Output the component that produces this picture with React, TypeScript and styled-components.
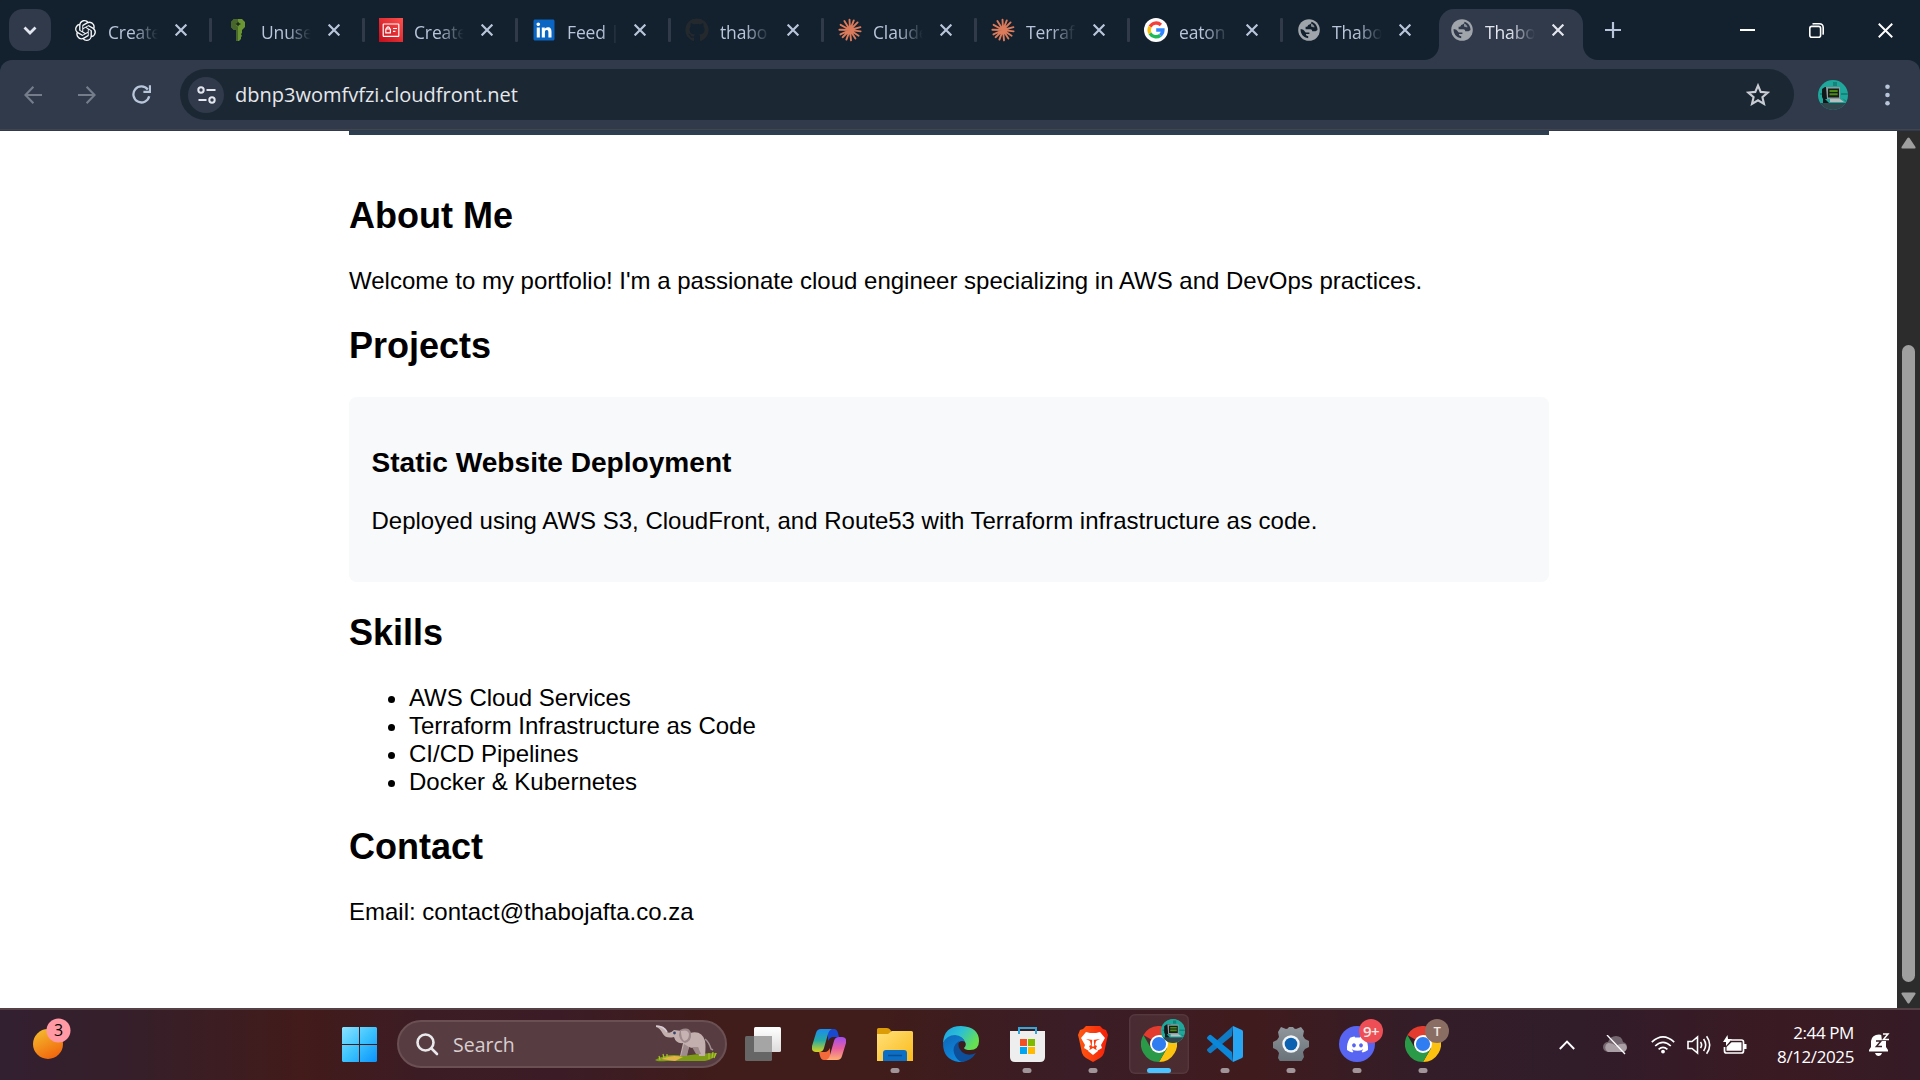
import React from "react";
import styled, { createGlobalStyle, css } from "styled-components";
import { SiOpenai, SiBrave } from "react-icons/si";
import { FaLinkedin, FaDiscord, FaGithub } from "react-icons/fa";

const GlobalStyle = createGlobalStyle`
  *, *::before, *::after { box-sizing: border-box; }
  html, body { margin: 0; padding: 0; overflow: hidden; background: #fff; }
`;

const uiFont = `"Open Sans", "Noto Sans", sans-serif`;
const frame = "#303a4b";
const strip = "#13202d";

const Screen = styled.div`
  width: 1920px;
  height: 1080px;
  display: flex;
  flex-direction: column;
  overflow: hidden;
  font-family: ${uiFont};
  svg { display: block; flex: none; }
`;

/* ---------- tab strip ---------- */

const TabStrip = styled.div`
  height: 60px;
  flex: none;
  display: flex;
  background: ${strip};
  padding-left: 9px;
`;

const TabSearch = styled.button`
  width: 42px;
  height: 42px;
  margin: 9px 8px 0 0;
  padding: 0;
  border: 0;
  border-radius: 14px;
  background: ${frame};
  display: grid;
  place-items: center;
`;

const Tab = styled.div<{ $active?: boolean }>`
  position: relative;
  width: 153px;
  height: 60px;
  padding-left: 14px;
  display: flex;
  align-items: center;
  color: ${(p) => (p.$active ? "#e3e6ee" : "#b9c5da")};
  ${(p) =>
    p.$active &&
    css`
      &::before {
        content: "";
        position: absolute;
        left: 3px;
        top: 9px;
        width: 144px;
        height: 51px;
        border-radius: 15px 15px 0 0;
        background: ${frame};
      }
      &::after {
        content: "";
        position: absolute;
        left: -12px;
        bottom: 0;
        width: 174px;
        height: 15px;
        background:
          radial-gradient(circle at 0 0, transparent 14.5px, ${frame} 15.5px) left / 15px 15px no-repeat,
          radial-gradient(circle at 100% 0, transparent 14.5px, ${frame} 15.5px) right / 15px 15px no-repeat;
      }
    `}
  > * { position: relative; z-index: 1; }
`;

const Favicon = styled.span`
  width: 24px;
  height: 24px;
  display: grid;
  place-items: center;
`;

const TabTitle = styled.span<{ $fade: boolean }>`
  width: 50px;
  margin: 3px 0 0 11px;
  overflow: hidden;
  white-space: nowrap;
  font-size: 17.5px;
  line-height: 26px;
  letter-spacing: -0.15px;
  mask-image: linear-gradient(90deg, #000 ${(p) => (p.$fade ? "50%" : "70%")}, transparent 100%);
`;

const TabClose = styled.span`
  margin-left: 17px;
  display: flex;
`;

const TabDivider = styled.span`
  width: 3px;
  height: 24px;
  margin-left: auto;
  border-radius: 1px;
  background: #303a49;
`;

const NewTab = styled.div`
  width: 54px;
  height: 60px;
  margin-left: -3px;
  display: grid;
  place-items: center;
`;

const WindowControls = styled.div`
  margin-left: auto;
  display: flex;
  height: 60px;
  > span {
    width: 69px;
    display: grid;
    place-items: center;
  }
`;

/* ---------- toolbar ---------- */

const ToolbarBack = styled.div`
  flex: none;
  background: ${strip};
`;

const Toolbar = styled.div`
  height: 71px;
  padding: 9px 18px 0 6px;
  display: flex;
  align-items: flex-start;
  background: linear-gradient(#40454e, #40454e) 0 69px / 100% 1px no-repeat ${frame};
  border-radius: 12px 12px 0 0;
`;

const ToolButton = styled.div<{ $w?: number }>`
  width: ${(p) => p.$w ?? 54}px;
  height: 51px;
  display: grid;
  place-items: center;
`;

const Omnibox = styled.div`
  width: 1614px;
  height: 51px;
  margin-left: 12px;
  padding: 0 24px 0 8px;
  border-radius: 26px;
  background: #1b2733;
  display: flex;
  align-items: center;
`;

const SiteInfo = styled.span`
  width: 36px;
  height: 36px;
  border-radius: 50%;
  background: ${frame};
  display: grid;
  place-items: center;
`;

const Address = styled.span`
  flex: 1;
  margin-left: 11px;
  color: #e6e8ec;
  font-size: 20px;
  line-height: 28px;
`;

/* ---------- page ---------- */

const Viewport = styled.div`
  height: 877px;
  flex: none;
  display: flex;
  background: #fff;
`;

const Page = styled.main`
  width: 1897px;
  padding: 0 348px 0 349px;
  font-family: Arial, "Liberation Sans", sans-serif;
  font-size: 24px;
  line-height: 28px;
  color: #000;
`;

const HeaderEdge = styled.div`
  height: 4px;
  background: #2c3e50;
`;

const Content = styled.div`
  padding-top: 30px;
`;

const Heading = styled.h2`
  margin: 30px 0;
  font-size: 36px;
  line-height: 42px;
  font-weight: 700;
`;

const Paragraph = styled.p`
  margin: 0;
`;

const ProjectCard = styled.section`
  height: 185px;
  padding: 50px 22.5px 0;
  border-radius: 7.5px;
  background: #f8f9fa;
`;

const ProjectTitle = styled.h3`
  margin: 0 0 28px;
  font-size: 28.08px;
  line-height: 32px;
`;

const SkillList = styled.ul`
  margin: 0;
  padding-left: 60px;
`;

const Scrollbar = styled.div`
  width: 23px;
  background: #2c2c2c;
  display: flex;
  flex-direction: column;
  align-items: center;
  padding: 6px 0 4px;
`;

const ScrollThumb = styled.div`
  width: 13px;
  height: 637px;
  margin-top: 196px;
  border-radius: 7px;
  background: #9f9f9f;
`;

/* ---------- taskbar ---------- */

const Taskbar = styled.div`
  height: 72px;
  flex: none;
  display: flex;
  border-top: 2px solid #544045;
  background: linear-gradient(
    90deg,
    #321f30 0, #361f29 140px, #421b1a 300px, #3c1c24 420px, #3b1c26 560px, #401c1a 720px,
    #401c1a 880px, #3a1d27 1080px, #401b1d 1250px, #331d28 1420px, #311c2a 1580px,
    #3a1a22 1780px, #351b26 1920px
  );
`;

const Widgets = styled.div`
  width: 326px;
  padding: 8px 0 0 30px;
`;

const StartButton = styled.div`
  width: 67px;
  height: 68px;
  display: grid;
  place-items: center;
`;

const SearchBox = styled.div`
  width: 330px;
  height: 48px;
  margin: 10px 3px 0 4px;
  padding-left: 17px;
  display: flex;
  align-items: center;
  border: 2px solid #6a5053;
  border-radius: 24px;
  background: #573d41;
  color: #d9cfd0;
  font-size: 19.5px;
  overflow: hidden;
  > span { margin: 1px auto 0 14px; }
`;

const AppSlot = styled.div<{ $active?: boolean }>`
  position: relative;
  width: 60px;
  height: 60px;
  margin: 4px 3px 0;
  display: grid;
  place-items: center;
  border-radius: 6px;
  ${(p) => p.$active && css`background: rgba(255, 255, 255, 0.07); box-shadow: inset 0 0 0 1.5px rgba(255, 255, 255, 0.06);`}
`;

const RunningMark = styled.i<{ $active?: boolean }>`
  position: absolute;
  bottom: 1px;
  left: 50%;
  transform: translateX(-50%);
  width: ${(p) => (p.$active ? 24 : 9)}px;
  height: 5px;
  border-radius: 2.5px;
  background: ${(p) => (p.$active ? "#4cc2ff" : "#a1959a")};
`;

const AppBadge = styled.span<{ $bg: string; $size?: number }>`
  position: absolute;
  left: 32px;
  top: 4.5px;
  width: 24px;
  height: 24px;
  border-radius: 50%;
  background: ${(p) => p.$bg};
  color: #f3e9e6;
  font-size: ${(p) => p.$size ?? 13}px;
  font-weight: 600;
  line-height: 24px;
  text-align: center;
  overflow: hidden;
  letter-spacing: -0.5px;
`;

const Tray = styled.div`
  margin-left: auto;
  padding-right: 30px;
  height: 69px;
  display: flex;
  align-items: center;
`;

const TrayIcon = styled.span<{ $w: number; $ml: number }>`
  width: ${(p) => p.$w}px;
  margin-left: ${(p) => p.$ml}px;
  display: grid;
  place-items: center;
`;

const Clock = styled.div`
  width: 107px;
  color: #fff;
  font-size: 17px;
  line-height: 24px;
  text-align: right;
  letter-spacing: -0.4px;
`;

/* ---------- drawings ---------- */

const Cross = ({ size = 12, width = 2.2, color = "currentColor" }) => (
  <svg width={size} height={size} viewBox="0 0 12 12" stroke={color} strokeWidth={width} fill="none">
    <path d="M.6.6l10.8 10.8M11.4.6L.6 11.4" />
  </svg>
);

const KeyIcon = () => (
  <svg width="16" height="24" viewBox="0 0 16 24">
    <path d="M4 1h8l3 3v5l-3 3v3l-1 1 1 2-1 1v2l-2 2H6V12H4L1 9V4z" fill="#6b9432" />
    <path d="M4 1h4v3L5 6l3 3v14H6V12H4L1 9V4z" fill="#47682a" />
    <path d="M8 3.4l1 1.6 2 1-2 1-1 1.6L7 7 5 6l2-1z" fill="#1c2b1d" />
  </svg>
);

const CardIcon = () => (
  <svg width="24" height="24" viewBox="0 0 24 24">
    <defs>
      <linearGradient id="acm" x1="0" y1="1" x2="1" y2="0">
        <stop offset="0" stopColor="#c20d1b" />
        <stop offset="1" stopColor="#ff4f4b" />
      </linearGradient>
    </defs>
    <path fill="url(#acm)" d="M0 0h24v24H0z" />
    <g fill="none" stroke="#fff" strokeWidth="1.2">
      <rect x="4.2" y="6" width="15.6" height="12.4" rx=".6" />
      <path d="M6.8 11h4.6v3.8H6.8zM7.8 11V9.6q1.3-1.6 2.6 0V11M14 10.5h4M14 13.4h2.4" />
    </g>
  </svg>
);

const Burst = () => (
  <svg width="24" height="24" viewBox="0 0 24 24" stroke="#dc7b5b" strokeWidth="1.9" strokeLinecap="round">
    <path d="M12 12L11.5 1.6M12 12l3.8-9.6M12 12l7.6-7.6M12 12l10.4-2.8M12 12l10.6 1.4M12 12l8.6 5.8M12 12l5.4 8.6M12 12l1 10.4M12 12l-3.6 9.6M12 12l-7.4 7.2M12 12L2.4 16.4M12 12L1.4 11.8M12 12L2.6 6.8M12 12L6.4 3" />
  </svg>
);

const GoogleIcon = () => (
  <svg width="24" height="24" viewBox="0 0 24 24" fill="none" strokeWidth="3.4">
    <circle cx="12" cy="12" r="12" fill="#fff" />
    <path d="M6.1 8.6A6.9 6.9 0 0 1 16.9 7" stroke="#f5403a" />
    <path d="M6 15.3a6.9 6.9 0 0 1 0-6.6" stroke="#fcbd07" />
    <path d="M16.3 17.3A6.9 6.9 0 0 1 6 15.3" stroke="#1db954" />
    <path d="M12.2 12h6.7a6.9 6.9 0 0 1-2.6 5.3" stroke="#3186ff" />
  </svg>
);

const Globe = ({ bg }: { bg: string }) => (
  <svg width="22" height="22" viewBox="0 0 22 22">
    <circle cx="11" cy="11" r="10.8" fill="#a0a5ab" />
    <path
      fill={bg}
      d="M13.5 2.8c-.2 2-1.400 3-3.300 3.100L9.200 7.800H7.600v2.400h4.600c1.500 0 2 .8 2 2.100h2.400c1.200 0 1.700-.5 2.900-1.300.1-3.700-2.400-7.200-6-8.200zM2.600 10.100c-.4 4.700 2.900 8.600 7.600 9.200v-2.200c-1.500 0-2.300-.8-2.300-2.200h3.500v-1.300H8.600C7.400 13.600 7 12.700 6 11.500 5.200 10.600 4 10.400 2.600 10.100z"
    />
    <path fill="#a0a5ab" d="M13 4.500c2 .6 3.200 2 3.600 3.700-1.600.3-2.400-.6-3.600-.8z" opacity=".8" />
  </svg>
);

const ComputerAvatar = ({ size }: { size: number }) => (
  <svg width={size} height={size} viewBox="0 0 30 30">
    <defs>
      <clipPath id={`av${size}`}><circle cx="15" cy="15" r="15" /></clipPath>
    </defs>
    <g clipPath={`url(#av${size})`}>
      <path fill="#1fa79b" d="M0 0h30v30H0z" />
      <path fill="#15857c" d="M15 2h4v4h-4zM2 13h5v2H2zM23 13h7v2h-7zM24 18l5 3v2z" />
      <path fill="#31474d" d="M0 23h30v7H0z" />
      <path fill="#0f1719" d="M4 9l3-2h5v12H7l4 4H5v-4l-1-2z" />
      <path fill="#8f9b9d" d="M8 7h14v12H9z" />
      <path fill="#151e1a" d="M10 8.500h11v9H10z" />
      <path fill="#4d8a12" d="M11.500 10h8.200v2h-8.200zM11.500 13.200h8.200v2h-8.200z" />
      <path fill="#b6bfc0" d="M12 19h10l4 3H12z" />
    </g>
  </svg>
);

const WindowsLogo = () => (
  <svg width="35" height="35" viewBox="0 0 35 35">
    <defs>
      <linearGradient id="win" x1="0" y1="0" x2="1" y2="1">
        <stop offset="0" stopColor="#8be3ff" />
        <stop offset=".5" stopColor="#3cc3fd" />
        <stop offset="1" stopColor="#0a93fb" />
      </linearGradient>
    </defs>
    <path fill="url(#win)" d="M1 0h16v17H0V1zM18 0h16l1 1v16H18zM0 18h17v17H1l-1-1zM18 18h17v16l-1 1H18z" />
  </svg>
);

const Elephant = () => (
  <svg width="66" height="40" viewBox="0 0 66 40">
    <path d="M2 36q12-7 28-4 20-3 34-3-2 6-12 8H14Q4 38 2 36z" fill="#7f9c17" />
    <path d="M8 35q10-5 22-2l-8 4z" fill="#dfb546" />
    <path d="M6 32l1 4M10 30l1 4M14 30v4M56 29v6M60 28l-1 6M63 29l-2 5" stroke="#a6c428" strokeWidth="1.200" />
    <path d="M3 2q7-1 10 5 3 4 8-1l8 1q4 2 8 2 12-3 15 8 1 5 0 15h-6l-1-9q-5 2-9 0l-3 9h-6l3-13q-7 1-9-6-8 2-11-3Q7 4 3 3z" fill="#c3b0ae" />
    <path d="M36 23l-2 9h-6l3-12zM45 23l3 7h-5l-4-7z" fill="#a08b8c" />
    <path d="M27 6q9-4 11 3 1 8-6 10-5-2-6-8z" fill="#9d888b" />
    <path d="M28 7q7-2 8 3 0 6-5 7-3-3-3-10z" fill="#c6b3b1" />
    <path d="M3 2q8 0 11 6" stroke="#d8cbd6" strokeWidth="1.600" fill="none" />
    <circle cx="21.500" cy="9" r="1.400" fill="#34446c" />
    <path d="M52 15q4 3 6 10l2 1" stroke="#a08e93" strokeWidth="1.500" fill="none" />
  </svg>
);

const TaskView = () => (
  <svg width="36" height="34" viewBox="0 0 36 34">
    <defs>
      <linearGradient id="tv" x1="0" y1="0" x2="0" y2="1">
        <stop offset="0" stopColor="#fff" /><stop offset="1" stopColor="#dcdcdc" />
      </linearGradient>
    </defs>
    <rect x="0" y="9" width="27" height="25" rx="1.500" fill="#666" />
    <rect x="9" y="0" width="27" height="25" rx="1.500" fill="url(#tv)" />
    <path d="M9 9h18v16H9z" fill="#a5a5a5" />
  </svg>
);

const Copilot = () => (
  <svg width="34" height="31" viewBox="0 0 34 31">
    <defs>
      <linearGradient id="cpa" x1="0" y1="0" x2="0" y2="1">
        <stop offset="0" stopColor="#1a8df0" /><stop offset=".5" stopColor="#27aaa4" /><stop offset="1" stopColor="#d9d21c" />
      </linearGradient>
      <linearGradient id="cpb" x1="0" y1="0" x2="0" y2="1">
        <stop offset="0" stopColor="#a04df2" /><stop offset=".5" stopColor="#e7609d" /><stop offset="1" stopColor="#ffae72" />
      </linearGradient>
    </defs>
    <path d="M16 0h6q3 0 4 4l1 4h-6q-3 0-5 4z" fill="#1849cf" />
    <path d="M18 31h-6q-3 0-4-4l-1-4h6q3 0 5-4z" fill="#f36a3b" />
    <path d="M9 0h11q-3 1-4 5l-4 14q-1 4-5 4H4q-5 0-4-6L4 4q1-4 5-4z" fill="url(#cpa)" />
    <path d="M25 31H14q3-1 4-5l4-14q1-4 5-4h3q5 0 4 6l-4 13q-1 4-5 4z" fill="url(#cpb)" />
  </svg>
);

const Folder = () => (
  <svg width="36" height="33" viewBox="0 0 36 33">
    <defs>
      <linearGradient id="fo" x1="0" y1="0" x2="1" y2="1">
        <stop offset="0" stopColor="#ffe07a" /><stop offset="1" stopColor="#fbbb1a" />
      </linearGradient>
    </defs>
    <path d="M0 1.500Q0 0 1.500 0H10q2 0 3 1.500L15 4v5H0z" fill="#dc9c08" />
    <path d="M0 6h11l4-3h19.500Q36 3 36 4.500V33H0z" fill="url(#fo)" />
    <path d="M6 33v-8q0-3 3-3h18q3 0 3 3v8z" fill="#0c6fc4" />
    <path d="M11 27.500h14" stroke="#0a4f93" strokeWidth="1.500" />
  </svg>
);

const Edge = () => (
  <svg width="36" height="36" viewBox="0 0 36 36">
    <defs>
      <linearGradient id="eg" x1="0" y1="0" x2="1" y2=".5">
        <stop offset="0" stopColor="#1b9fe4" /><stop offset=".5" stopColor="#2cc0d4" /><stop offset="1" stopColor="#66e050" />
      </linearGradient>
      <linearGradient id="eb" x1="0" y1="0" x2=".6" y2="1">
        <stop offset="0" stopColor="#1066b8" /><stop offset="1" stopColor="#0d8ee0" />
      </linearGradient>
    </defs>
    <path d="M0 17Q1 0 18 0q18 1 18 15 0 9-9 9-5 0-6-2 3-3 1-6-2-5-9-6Q5 10 0 17z" fill="url(#eg)" />
    <path d="M0 17Q4 9 12 9q8 1 10 7-3-2-6 0-5 5-1 12 5 6 12 4-5 4-11 4Q0 34 0 17z" fill="url(#eb)" />
    <path d="M16 15q-7 5-5 12 2 7 8 9 9-1 14-9-8 4-14-1-5-5-3-11z" fill="#0e4f9b" />
  </svg>
);

const Store = () => (
  <svg width="35" height="35" viewBox="0 0 35 35">
    <path d="M0 4h35v26q0 5-5 5H5q-5 0-5-5z" fill="#eee" />
    <path d="M9 7V1h17v6" stroke="#35a6d8" strokeWidth="2" fill="none" />
    <path d="M10 12h7v7h-7z" fill="#f25022" /><path d="M18 12h7v7h-7z" fill="#7fba00" />
    <path d="M10 20h7v7h-7z" fill="#00a4ef" /><path d="M18 20h7v7h-7z" fill="#ffb900" />
  </svg>
);

const BraveLogo = () => (
  <svg width="30" height="36" viewBox="0 0 30 36">
    <defs>
      <linearGradient id="br" x1="0" x2="1"><stop offset="0" stopColor="#ff5a12" /><stop offset="1" stopColor="#f51f0a" /></linearGradient>
    </defs>
    <path d="M8 0h14l3 3 3 1 2 5-1 4-3 14q-1 3-4 5l-7 4-7-4q-3-2-4-5L1 13 0 9l2-5 3-1z" fill="url(#br)" />
    <path
      fill="#fff"
      d="M8 6l4 1h6l4-1 5 6-4 7 1 3-5 3-1-3 1-2-2-1 1-4 4-2-7 1-7-1 4 2 1 4-2 1 1 2-1 3-5-3 1-3-4-7zM15 22l5 3-5 4-5-4z"
    />
    <path d="M14.200 14h1.600l.5 6-1.300.7-1.300-.7z" fill="#fff" />
  </svg>
);

const Chrome = () => (
  <svg width="36" height="36" viewBox="0 0 36 36">
    <path d="M18 18L2.400 9a18 18 0 0 1 31.200 0z" fill="#e33b2e" />
    <path d="M18 9h15.600A18 18 0 0 1 18 36l7.800-13.500z" fill="#fcc210" />
    <path d="M2.400 9A18 18 0 0 0 18 36l7.800-13.500H10.200z" fill="#2a9a48" />
    <path d="M2.400 9l7.800 13.500L18 9z" fill="#e33b2e" opacity="0" />
    <circle cx="18" cy="18" r="9" fill="#fff" />
    <circle cx="18" cy="18" r="7.100" fill="#2f7df0" />
  </svg>
);

const VsCode = () => (
  <svg width="36" height="36" viewBox="0 0 36 36">
    <path d="M26 0l-1 10L4 27q-1 .5-2-.2L.4 25q-.8-1 0-2z" fill="#0f7bc4" />
    <path d="M26 36l-1-10L4 9q-1-.5-2 .2L.4 11q-.8 1 0 2z" fill="#0a87d8" />
    <path d="M26 0l9 4q1 .5 1 2v24q0 1.500-1 2l-9 4z" fill="#27a5f2" />
  </svg>
);

const Gear = () => (
  <svg width="36" height="34" viewBox="0 0 36 34">
    <defs>
      <linearGradient id="ge" x1="0" y1="0" x2="0" y2="1"><stop offset="0" stopColor="#8f969c" /><stop offset="1" stopColor="#677077" /></linearGradient>
    </defs>
    <path
      d="M8 0l5 2q2 0 3-2h4q1 2 3 2l5-2 3 4-1 5 2 3 4 2v6l-4 2-2 3 1 5-3 5-5-1q-2 0-3 2h-4q-1-2-3-2l-5 2-3-5 1-5-2-3-4-2v-6l4-2 2-3-1-5z"
      fill="url(#ge)"
    />
    <circle cx="18" cy="17" r="8.700" fill="#f2f5f8" />
    <circle cx="18" cy="17" r="6.300" fill="#0c62b0" />
  </svg>
);

const DiscordDisc = styled.span`
  width: 36px;
  height: 36px;
  border-radius: 50%;
  background: #5865f2;
  color: #fff;
  display: grid;
  place-items: center;
`;

const tabs = [
  { title: "Create", icon: <SiOpenai size={21} color="#f4f6f8" /> },
  { title: "Unuse", icon: <KeyIcon /> },
  { title: "Create", icon: <CardIcon /> },
  { title: "Feed |", icon: <FaLinkedin size={24} color="#0a66c2" style={{ background: "linear-gradient(#fff,#fff) center / 17px 17px no-repeat" }} /> },
  { title: "thabo", icon: <FaGithub size={24} color="#24292e" /> },
  { title: "Claude", icon: <Burst /> },
  { title: "Terrafo", icon: <Burst /> },
  { title: "eaton", icon: <GoogleIcon /> },
  { title: "Thabo", icon: <Globe bg={strip} /> },
  { title: "Thabo", icon: <Globe bg={frame} /> },
];

const skills = ["AWS Cloud Services", "Terraform Infrastructure as Code", "CI/CD Pipelines", "Docker & Kubernetes"];

const apps: { icon: React.ReactNode; running?: boolean; active?: boolean; badge?: React.ReactNode }[] = [
  { icon: <TaskView /> },
  { icon: <Copilot /> },
  { icon: <Folder />, running: true },
  { icon: <Edge /> },
  { icon: <Store />, running: true },
  { icon: <BraveLogo />, running: true },
  { icon: <Chrome />, running: true, active: true, badge: <AppBadge $bg="#1fa79b"><ComputerAvatar size={24} /></AppBadge> },
  { icon: <VsCode />, running: true },
  { icon: <Gear />, running: true },
  { icon: <DiscordDisc><FaDiscord size={23} /></DiscordDisc>, running: true, badge: <AppBadge $bg="#ee4f56" $size={15}>9+</AppBadge> },
  { icon: <Chrome />, running: true, badge: <AppBadge $bg="#8b6e63">T</AppBadge> },
];

export default function App() {
  return (
    <Screen>
      <GlobalStyle />
      <TabStrip>
        <TabSearch>
          <svg width="14" height="9" viewBox="0 0 14 9" fill="none" stroke="#e3e6ee" strokeWidth="2.800">
            <path d="M1.500 1.500L7 7l5.500-5.500" />
          </svg>
        </TabSearch>
        {tabs.map((t, i) => (
          <Tab key={i} $active={i === 9}>
            <Favicon>{t.icon}</Favicon>
            <TabTitle $fade={t.title !== "Feed |"}>{t.title}</TabTitle>
            <TabClose><Cross /></TabClose>
            {i < 8 && <TabDivider />}
          </Tab>
        ))}
        <NewTab>
          <svg width="16" height="16" viewBox="0 0 16 16" stroke="#b9c5da" strokeWidth="2.200"><path d="M8 0v16M0 8h16" /></svg>
        </NewTab>
        <WindowControls>
          <span><svg width="15" height="2" viewBox="0 0 15 2"><path fill="#fff" d="M0 0h15v2H0z" /></svg></span>
          <span>
            <svg width="15" height="15" viewBox="0 0 15 15" fill="none" stroke="#fff" strokeWidth="1.600">
              <rect x=".8" y="3.400" width="10.800" height="10.800" rx="2" />
              <path d="M3.500 1q.6-.2 1.500-.2h5.200q4 0 4 4V10q0 1-.4 1.600" />
            </svg>
          </span>
          <span><Cross size={15} width={1.5} color="#fff" /></span>
        </WindowControls>
      </TabStrip>

      <ToolbarBack>
        <Toolbar>
          <ToolButton>
            <svg width="18" height="18" viewBox="0 0 18 18" fill="none" stroke="#757d8b" strokeWidth="2.100"><path d="M18 9H1.500M9.400 .8L1.400 9l8 8.200" /></svg>
          </ToolButton>
          <ToolButton>
            <svg width="18" height="18" viewBox="0 0 18 18" fill="none" stroke="#757d8b" strokeWidth="2.100"><path d="M0 9h16.500M8.600 .8l8 8.200-8 8.200" /></svg>
          </ToolButton>
          <ToolButton>
            <svg width="19" height="19" viewBox="0 0 19 19" fill="none" stroke="#b9c5da" strokeWidth="2.300">
              <path d="M15.800 4.600A8 8 0 1 0 17.200 11.300M18 .3v6.600h-6.600" />
            </svg>
          </ToolButton>
          <Omnibox>
            <SiteInfo>
              <svg width="19" height="18" viewBox="0 0 19 18" fill="none" stroke="#e3e6ee" strokeWidth="2">
                <circle cx="4" cy="4" r="2.700" /><path d="M9.500 4h9M1.500 14h8" /><circle cx="15" cy="14" r="2.700" />
              </svg>
            </SiteInfo>
            <Address>dbnp3womfvfzi.cloudfront.net</Address>
            <svg width="24" height="23" viewBox="0 0 24 23" fill="none" stroke="#c9ccd3" strokeWidth="2.100">
              <path d="M12 2.500l2.700 6.400 7 .6-5.300 4.600 1.600 6.800-6-3.600-6 3.600 1.600-6.800-5.300-4.600 7-.6z" />
            </svg>
          </Omnibox>
          <ToolButton $w={78}><ComputerAvatar size={30} /></ToolButton>
          <ToolButton $w={30}>
            <svg width="5" height="22" viewBox="0 0 5 22" fill="#b9c5da"><circle cx="2.500" cy="2.700" r="2.300" /><circle cx="2.500" cy="11" r="2.300" /><circle cx="2.500" cy="19.300" r="2.300" /></svg>
          </ToolButton>
        </Toolbar>
      </ToolbarBack>

      <Viewport>
        <Page>
          <HeaderEdge />
          <Content>
            <Heading>About Me</Heading>
            <Paragraph>Welcome to my portfolio! I'm a passionate cloud engineer specializing in AWS and DevOps practices.</Paragraph>
            <Heading>Projects</Heading>
            <ProjectCard>
              <ProjectTitle>Static Website Deployment</ProjectTitle>
              <Paragraph>Deployed using AWS S3, CloudFront, and Route53 with Terraform infrastructure as code.</Paragraph>
            </ProjectCard>
            <Heading>Skills</Heading>
            <SkillList>{skills.map((s) => <li key={s}>{s}</li>)}</SkillList>
            <Heading>Contact</Heading>
            <Paragraph>Email: contact@thabojafta.co.za</Paragraph>
          </Content>
        </Page>
        <Scrollbar>
          <svg width="15" height="12" viewBox="0 0 15 12" fill="#9f9f9f"><path d="M6.500 1q1-1 2 0L14.500 10q.5 1.500-1 1.500h-12Q0 11.500.5 10z" /></svg>
          <ScrollThumb />
          <svg width="15" height="12" viewBox="0 0 15 12" fill="#9f9f9f" style={{ marginTop: "auto" }}><path d="M6.500 11q1 1 2 0L14.500 2q.5-1.500-1-1.500h-12Q0 .5.5 2z" /></svg>
        </Scrollbar>
      </Viewport>

      <Taskbar>
        <Widgets>
          <svg width="44" height="44" viewBox="0 0 44 44">
            <defs>
              <linearGradient id="sun" x1=".2" y1="0" x2=".7" y2="1"><stop offset="0" stopColor="#f4bb2d" /><stop offset="1" stopColor="#f1640c" /></linearGradient>
            </defs>
            <circle cx="18" cy="26" r="15" fill="url(#sun)" />
            <circle cx="28.500" cy="12.500" r="12" fill="#ff9aa5" />
            <text x="28.500" y="18" fontSize="16" textAnchor="middle" fill="#000">3</text>
          </svg>
        </Widgets>
        <StartButton><WindowsLogo /></StartButton>
        <SearchBox>
          <svg width="23" height="23" viewBox="0 0 23 23" fill="none" stroke="#e9e9ec" strokeWidth="2.600" strokeLinecap="round">
            <circle cx="9.500" cy="9.500" r="8" /><path d="M15.500 15.500l5.500 5.500" />
          </svg>
          <span>Search</span>
          <div style={{ marginRight: 6 }}><Elephant /></div>
        </SearchBox>
        {apps.map((a, i) => (
          <AppSlot key={i} $active={a.active}>
            {a.icon}
            {a.badge}
            {a.running && <RunningMark $active={a.active} />}
          </AppSlot>
        ))}
        <Tray>
          <TrayIcon $w={16} $ml={0}>
            <svg width="16" height="10" viewBox="0 0 16 10" fill="none" stroke="#fff" strokeWidth="1.900"><path d="M.8 9L8 1.600 15.200 9" /></svg>
          </TrayIcon>
          <TrayIcon $w={24} $ml={28}>
            <svg width="24" height="20" viewBox="0 0 24 20">
              <path d="M5 17a5 5 0 0 1 0-10Q7 1 13 1q6 0 7 6 4 1 4 5t-4 5z" fill="#75676f" />
              <path d="M5 17a5 5 0 0 1 0-9q5 0 8 3 4-3 9-2 3 3 1 6-1 2-3 2z" fill="#a99fa5" />
              <path d="M4 0l18 19" stroke="#fff" strokeWidth="1.300" />
            </svg>
          </TrayIcon>
          <TrayIcon $w={24} $ml={24}>
            <svg width="24" height="18" viewBox="0 0 24 18" fill="none" stroke="#fff" strokeWidth="1.700">
              <path d="M.8 6.200q11.200-10.500 22.400 0M4.200 10q7.800-7.400 15.600 0M7.600 13.400q4.400-4 8.800 0" /><circle cx="12" cy="15.600" r="1.900" fill="#fff" stroke="none" />
            </svg>
          </TrayIcon>
          <TrayIcon $w={24} $ml={12}>
            <svg width="24" height="20" viewBox="0 0 24 20" fill="none" stroke="#fff" strokeWidth="1.600">
              <path d="M1 6.500h4L10.500 2v16L5 13.500H1zM13.500 7q2.200 3 0 6M16.600 4q4.200 6 0 12M19.600 1.200q6.200 8.800 0 17.600" />
            </svg>
          </TrayIcon>
          <TrayIcon $w={24} $ml={12}>
            <svg width="24" height="20" viewBox="0 0 24 20" fill="none" stroke="#fff" strokeWidth="1.700">
              <path d="M8 5h10.500q2 0 2 2v9q0 2-2 2h-15q-2 0-2-2v-4" /><path d="M8.500 7.200h10v8.600h-15V12z" fill="#fff" stroke="none" /><path d="M21 9h2.500v5H21zM4.500 0L0 7h3v4l6-7H5z" fill="#fff" stroke="none" />
            </svg>
          </TrayIcon>
          <Clock>2:44 PM<br />8/12/2025</Clock>
          <TrayIcon $w={22} $ml={14}>
            <svg width="22" height="23" viewBox="0 0 22 23">
              <path d="M1 17l2-3V8q1-6.500 8-6.500Q17 2 18 8v6l2 3v1.500H1zM7 20h7q-1 3-3.500 3T7 20z" fill="#fff" />
              <path d="M13 0h8v8h-7z" fill="#38202a" />
              <path d="M15 1h5l-4.600 5.500H21M8 8h5l-4.600 5.500H14" fill="none" stroke="#38202a" strokeWidth="1.500" />
              <path d="M15 1h5l-4.600 5.500H21" fill="none" stroke="#fff" strokeWidth="1.500" />
            </svg>
          </TrayIcon>
        </Tray>
      </Taskbar>
    </Screen>
  );
}
